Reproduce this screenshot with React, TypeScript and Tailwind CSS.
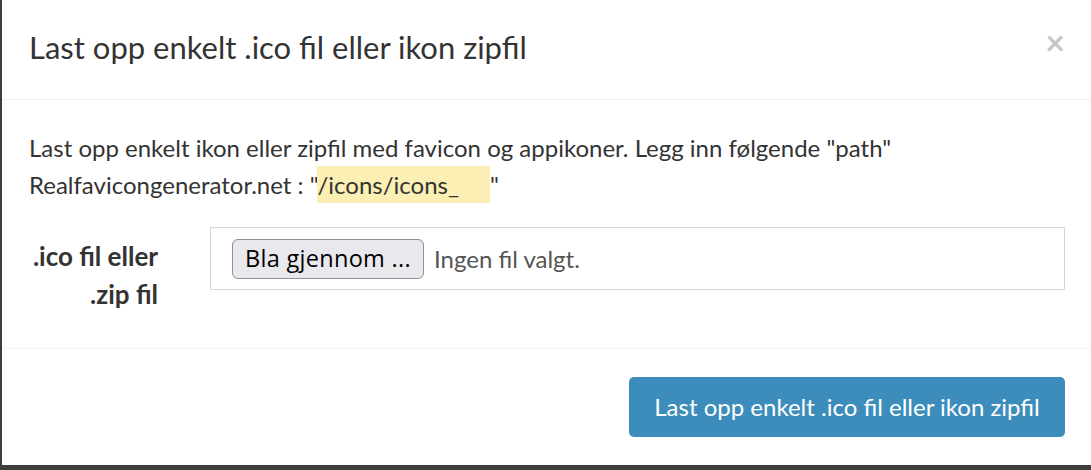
import React from "react";

export default function App() {
  return (
    <div className="w-[1091px] h-[470px] bg-[#3d3d3d] overflow-hidden" style={{ fontFamily: "Lato, 'Noto Sans', sans-serif" }}>
      <div className="h-[465px] ml-[2px] bg-white flex flex-col text-[#333]">
        <div className="h-[100px] border-b border-[#f0f0f0] flex items-center justify-between pl-[27px] pr-[27px]">
          <h4 className="text-[31px] leading-none text-[#333] pb-[4px]">Last opp enkelt .ico fil eller ikon zipfil</h4>
          <span className="text-[34px] font-bold leading-none text-[#c6c6c6] mb-[16px] mr-[-1px]">×</span>
        </div>
        <div className="h-[249px] border-b border-[#f4f4f4] pl-[27px] pr-[26px] pt-[29px]">
          <p className="text-[24px] leading-[37px]">
            Last opp enkelt ikon eller zipfil med favicon og appikoner. Legg inn følgende "path"
            <br />
            Realfavicongenerator.net : "<span className="bg-[#fbefb3] py-[4px]">/icons/icons_<span className="inline-block w-[31px] text-transparent">79</span></span>"
          </p>
          <div className="flex mt-[24px]">
            <label className="w-[129px] text-right font-bold text-[26px] leading-[38px] pt-[10px] whitespace-nowrap">
              .ico fil eller
              <br />
              .zip fil
            </label>
            <div className="ml-[52px] flex-1 h-[63px] border border-[#d2d6de] flex items-center pl-[21px]">
              <span className="h-[40px] w-[192px] rounded-[6px] border border-[#8f8f9d] bg-[#e9e9ed] text-black flex items-center justify-center text-[23.5px] tracking-[0.3px]" style={{ fontFamily: "'Open Sans', sans-serif" }}>
                Bla gjennom ...
              </span>
              <span className="ml-[10px] text-[24px] text-[#555]">Ingen fil valgt.</span>
            </div>
          </div>
        </div>
        <div className="flex-1 flex justify-end items-start pt-[28px] pr-[26px]">
          <button className="h-[60px] w-[436px] rounded-[5px] bg-[#3c8dbc] text-white text-[24px]">
            Last opp enkelt .ico fil eller ikon zipfil
          </button>
        </div>
      </div>
    </div>
  );
}
